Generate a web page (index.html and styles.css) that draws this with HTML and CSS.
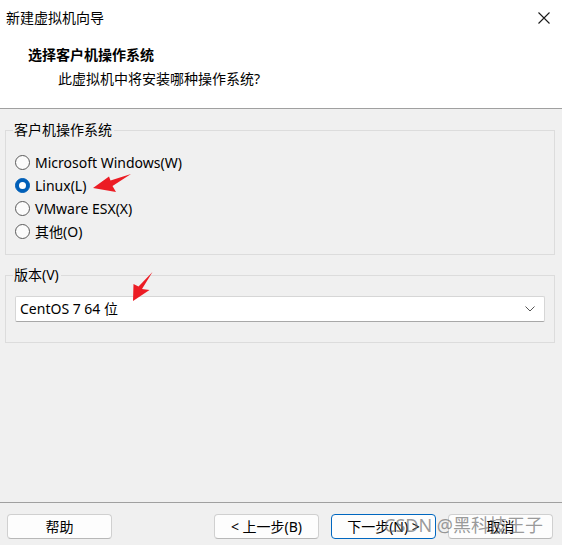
FILE: index.html
```html
<!DOCTYPE html>
<html lang="zh-CN">
<head>
<meta charset="utf-8">
<title>新建虚拟机向导</title>
<link rel="stylesheet" href="styles.css">
</head>
<body>
<div class="window">
  <header class="top">
    <div class="titlebar">
      <span class="title">新建虚拟机向导</span>
      <svg class="close" width="12" height="12" viewBox="0 0 12 12"><path d="M0.5 0.5 L11.5 11.5 M11.5 0.5 L0.5 11.5" stroke="#1a1a1a" stroke-width="1.1" fill="none"/></svg>
    </div>
    <div class="heading">选择客户机操作系统</div>
    <div class="subtitle">此虚拟机中将安装哪种操作系统?</div>
  </header>

  <main class="main">
    <fieldset class="group group-os">
      <legend>客户机操作系统</legend>
      <div class="radios">
        <label class="radio"><span class="dot"></span><span class="rtext">Microsoft Windows(W)</span></label>
        <label class="radio checked"><span class="dot"></span><span class="rtext">Linux(L)</span></label>
        <label class="radio"><span class="dot"></span><span class="rtext">VMware ESX(X)</span></label>
        <label class="radio"><span class="dot"></span><span class="rtext">其他(O)</span></label>
      </div>
    </fieldset>

    <fieldset class="group group-ver">
      <legend>版本(V)</legend>
      <div class="select">
        <span class="sel-text">CentOS 7 64 位</span>
        <svg class="chev" width="10" height="6" viewBox="0 0 10 6"><path d="M0.5 0.5 L5 5 L9.5 0.5" stroke="#555" stroke-width="1" fill="none"/></svg>
      </div>
    </fieldset>
  </main>

  <footer class="footer">
    <button class="btn">帮助</button>
    <div class="spacer"></div>
    <button class="btn">&lt; 上一步(B)</button>
    <button class="btn primary">下一步(N) &gt;</button>
    <button class="btn">取消</button>
  </footer>

  <svg class="arrow arrow1" width="562" height="545" viewBox="0 0 562 545">
    <polygon points="93,188 109,176.5 110.5,180.5 131,174 112.5,186 116,192" fill="#ec1c24"/>
    <polygon points="133,301 133.5,284 138.5,286.5 152.5,272 142,289 149.5,290" fill="#ec1c24"/>
  </svg>
  <div class="watermark">CSDN @黑科技王子</div>
</div>
</body>
</html>
```

FILE: styles.css
```css
* { box-sizing: border-box; }
html, body {
  margin: 0;
  padding: 0;
}
body {
  width: 562px;
  height: 545px;
  background: #f0f0f0;
  font-family: "Noto Sans", "Noto Sans CJK SC", sans-serif;
  font-size: 14px;
  color: #000;
  overflow: hidden;
}
.window {
  position: relative;
  width: 562px;
  height: 545px;
  display: flex;
  flex-direction: column;
}
.top {
  background: #fff;
  height: 109px;
  border-bottom: 1px solid #a0a0a0;
}
.titlebar {
  height: 36px;
  display: flex;
  align-items: center;
  padding: 0 12px 0 6px;
}
.title {
  flex: 1;
  font-size: 14px;
  line-height: 20px;
}
.close { display: block; }
.heading {
  margin-top: 9px;
  padding-left: 28px;
  font-weight: bold;
  line-height: 20px;
}
.subtitle {
  margin-top: 4px;
  padding-left: 58px;
  line-height: 20px;
}
.main {
  flex: 1;
  padding: 11px 7px 0 5px;
}
.group {
  margin: 0;
  padding: 0;
  border: 1px solid #dcdcdc;
  min-width: 0;
}
.group legend {
  margin-left: 7px;
  padding: 0 2px 0 1px;
  line-height: 20px;
  font-size: 14px;
}
.radios {
  padding: 11px 0 11px 9px;
}
.radio {
  display: flex;
  align-items: center;
  height: 23px;
}
.dot {
  width: 15px;
  height: 15px;
  border-radius: 50%;
  border: 1px solid #5a5a5a;
  background: #fbfbfb;
  margin-right: 5px;
  flex: none;
  display: flex;
  align-items: center;
  justify-content: center;
}
.radio.checked .dot {
  background: #005fb8;
  border-color: #005fb8;
}
.radio.checked .dot::after {
  content: "";
  width: 7px;
  height: 7px;
  border-radius: 50%;
  background: #fff;
}
.rtext { line-height: 20px; }
.group-ver {
  margin-top: 10px;
}
.select {
  margin: 11px 9px 20px 9px;
  height: 26px;
  background: #fff;
  border: 1px solid #d6d6d6;
  border-bottom-color: #a8a8a8;
  border-radius: 2px;
  display: flex;
  align-items: center;
  padding: 0 9px 0 4px;
}
.sel-text { flex: 1; line-height: 20px; }
.chev { display: block; }
.footer {
  height: 43px;
  border-top: 1px solid #a0a0a0;
  display: flex;
  align-items: flex-start;
  padding: 11px 9px 0 7px;
  gap: 12px;
}
.spacer { flex: 1; }
.btn {
  width: 105px;
  height: 25px;
  background: #fdfdfd;
  border: 1px solid #d0d0d0;
  border-bottom-color: #b8b8b8;
  border-radius: 4px;
  font-family: inherit;
  font-size: 14px;
  color: #000;
  padding: 0;
  line-height: 20px;
}
.btn.primary {
  border-color: #0067c0;
}
.arrow {
  position: absolute;
  left: 0;
  top: 0;
  pointer-events: none;
}
.watermark {
  position: absolute;
  left: 384px;
  top: 512px;
  font-size: 18px;
  line-height: 26px;
  color: rgba(110, 110, 110, 0.7);
  white-space: nowrap;
  pointer-events: none;
}
```
